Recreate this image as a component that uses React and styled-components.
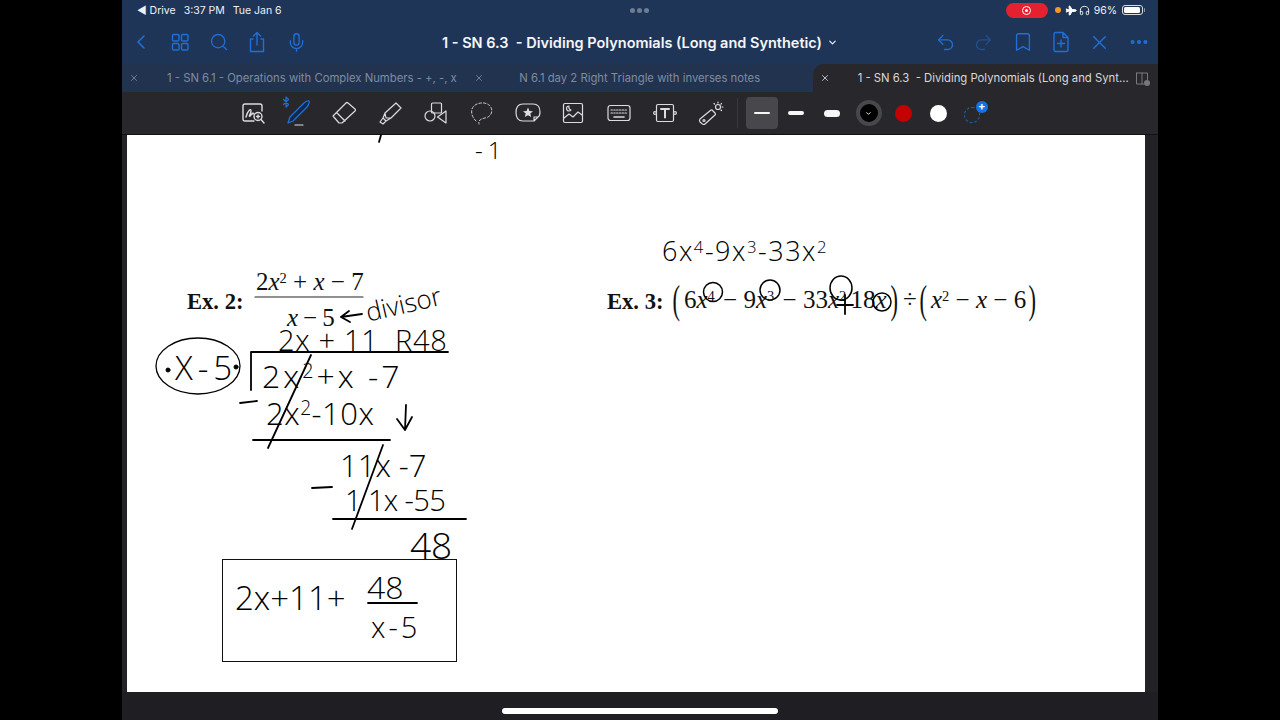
import React from "react";
import styled, { createGlobalStyle } from "styled-components";
import { ChevronLeft, Search, Mic, Undo2, Redo2, Bookmark, X, MoreHorizontal, ChevronDown, Plane, Headphones, Bluetooth } from "lucide-react";

const GlobalStyle = createGlobalStyle`
  html, body { margin: 0; padding: 0; background: #000; }
  body { font-family: Inter, "Liberation Sans", sans-serif; overflow: hidden; }
`;

const Screen = styled.div`
  width: 1036px;
  height: 720px;
  margin: 0 auto;
  display: flex;
  flex-direction: column;
  background: #1f1f23;
`;

const StatusBar = styled.div`
  height: 20px;
  background: #1f3557;
  color: #fff;
  display: flex;
  align-items: center;
  padding: 0 13px 0 15px;
  font-size: 10.5px;
`;
const StatusItem = styled.span`
  margin-left: ${(p) => p.$gap || 0}px;
  white-space: nowrap;
  color: #eef1f5;
`;
const Dots = styled.div`
  flex: 1;
  display: flex;
  justify-content: center;
  gap: 2px;
  padding-right: 8px;
  span { width: 5px; height: 5px; border-radius: 50%; background: #6e7d93; }
`;
const RecPill = styled.div`
  width: 42px;
  height: 15px;
  border-radius: 8px;
  background: #e5202f;
  display: flex;
  align-items: center;
  justify-content: center;
  i { width: 9px; height: 9px; border-radius: 50%; border: 1.5px solid #fff; display: flex; align-items: center; justify-content: center; box-sizing: border-box; }
  i::after { content: ""; width: 3px; height: 3px; border-radius: 50%; background: #fff; }
`;
const OrangeDot = styled.span`
  width: 6px;
  height: 6px;
  border-radius: 50%;
  background: #f09a2c;
  margin: 0 4px 0 7px;
`;
const PlaneIcon = styled(Plane)`
  transform: rotate(45deg);
`;
const PhonesIcon = styled(Headphones)`
  margin-left: 3px;
`;
const Battery = styled.div`
  width: 21px;
  height: 10px;
  margin: 0 2px 0 5px;
  border: 1px solid #d7dbe2;
  border-radius: 3px;
  padding: 1px;
  box-sizing: border-box;
  position: relative;
  &::before { content: ""; display: block; height: 100%; width: 92%; background: #fff; border-radius: 1.5px; }
  &::after { content: ""; position: absolute; right: -3px; top: 2px; width: 1.5px; height: 4px; background: #8f98a8; border-radius: 1px; }
`;

const NavBar = styled.div`
  height: 44px;
  background: #1f3557;
  display: grid;
  grid-template-columns: 1fr auto 1fr;
  align-items: center;
  color: #1f6fd6;
`;
const NavGroup = styled.div`
  display: flex;
  align-items: center;
  justify-content: ${(p) => (p.$end ? "flex-end" : "flex-start")};
`;
const NavBtn = styled.div`
  width: 38.7px;
  height: 26px;
  flex: none;
  display: flex;
  align-items: center;
  justify-content: center;
  color: ${(p) => (p.$dim ? "#235089" : "#1f6fd6")};
`;
const Title = styled.div`
  color: #f4f6f9;
  font-size: 14.5px;
  font-weight: 600;
  display: flex;
  align-items: center;
  gap: 5px;
  white-space: pre;
`;

const TabRow = styled.div`
  height: 28px;
  background: #1f3557;
  display: grid;
  grid-template-columns: repeat(3, 1fr);
`;
const Tab = styled.div`
  display: flex;
  align-items: center;
  padding: 0 8px 0 7px;
  font-size: 11.3px;
  white-space: pre;
  color: ${(p) => (p.$active ? "#d8d9dc" : "#7e8ba1")};
  background: ${(p) => (p.$active ? "#28282c" : "#223350")};
  border-radius: ${(p) => (p.$active ? "10px 0 0 0" : "0")};
`;
const TabLabel = styled.span`
  margin-left: ${(p) => p.$indent}px;
  flex: ${(p) => (p.$grow ? 1 : "none")};
`;
const PanelIcon = styled.span`
  position: relative;
  display: flex;
  color: #77777c;
  &::after {
    content: "";
    position: absolute;
    right: 0;
    bottom: 0;
    width: 6px;
    height: 6px;
    border-radius: 50%;
    background: #77777c;
  }
`;

const ToolBar = styled.div`
  height: 42px;
  background: #28282c;
  display: flex;
  align-items: center;
  padding-left: 108px;
  border-bottom: 1px solid #111;
  box-sizing: content-box;
`;
const Tool = styled.div`
  width: 45.8px;
  height: 32px;
  flex: none;
  display: flex;
  align-items: center;
  justify-content: center;
  color: #dcdcde;
  position: relative;
`;
const Divider = styled.div`
  width: 1px;
  height: 30px;
  background: #38383c;
  margin: 0 8px 0 3px;
`;
const SizeBtn = styled.div`
  width: ${(p) => (p.$active ? 32 : 36)}px;
  height: 32px;
  border-radius: 4px;
  flex: none;
  background: ${(p) => (p.$active ? "#47474c" : "transparent")};
  display: flex;
  align-items: center;
  justify-content: center;
  &::before {
    content: "";
    width: ${(p) => p.$w}px;
    height: ${(p) => p.$h}px;
    border-radius: 4px;
    background: #f6f6f6;
  }
`;
const Swatch = styled.div`
  width: 35px;
  flex: none;
  display: flex;
  align-items: center;
  justify-content: center;
  &::before {
    content: "";
    width: 17px;
    height: 17px;
    border-radius: 50%;
    background: ${(p) => p.$color};
  }
`;
const BlackSwatch = styled.div`
  width: 26px;
  height: 26px;
  margin: 0 4.5px 0 6px;
  flex: none;
  border-radius: 50%;
  background: #000;
  border: 4px solid #47474c;
  box-sizing: border-box;
  color: #fff;
  display: flex;
  align-items: center;
  justify-content: center;
`;
const AddColor = styled.div`
  width: 28px;
  height: 26px;
  margin-left: 7.5px;
  position: relative;
  flex: none;
  &::before {
    content: "";
    position: absolute;
    left: 0;
    top: 7px;
    width: 16px;
    height: 16px;
    border-radius: 50%;
    border: 1.3px dashed #2a63b0;
    box-sizing: border-box;
  }
  &::after {
    content: "+";
    position: absolute;
    left: 12px;
    top: 1px;
    width: 12px;
    height: 12px;
    border-radius: 50%;
    background: #0f74e8;
    color: #fff;
    font-size: 11px;
    line-height: 11px;
    font-weight: 700;
    text-align: center;
  }
`;
const BtBadge = styled.span`
  position: absolute;
  left: 4px;
  top: -1px;
  color: #1f6fd6;
  display: flex;
`;

const Body = styled.div`
  flex: 1;
  display: flex;
  padding: 0 13px 0 5px;
  background: #232327;
`;
const Page = styled.div`
  flex: 1;
  background: #fff;
  position: relative;
`;
const HomeArea = styled.div`
  height: 28px;
  background: #1f1f23;
  display: flex;
  align-items: flex-end;
  justify-content: center;
  padding-bottom: 6px;
  box-sizing: border-box;
  &::before { content: ""; width: 276px; height: 6px; border-radius: 3px; background: #fff; }
`;

// things written on the note sit at their place on the page
const Printed = styled.span`
  position: absolute;
  left: ${(p) => p.$x - 127}px;
  top: ${(p) => p.$y - 135}px;
  font-family: "Liberation Serif", serif;
  font-size: ${(p) => p.$size || 25}px;
  font-weight: ${(p) => (p.$bold ? 700 : 400)};
  line-height: 1;
  color: #111;
  white-space: pre;
  i { font-style: italic; }
  sup {
    font-size: 0.58em;
    line-height: 0;
    vertical-align: baseline;
    position: relative;
    top: -0.5em;
    padding-right: ${(p) => p.$supGap || 0}px;
  }
`;
const Paren = styled(Printed)`
  transform: scale(0.9, 1.6);
  transform-origin: center;
`;
const Ink = styled.span`
  position: absolute;
  left: ${(p) => p.$x - 127}px;
  top: ${(p) => p.$y - 135}px;
  font-family: "Open Sans", "Liberation Sans", sans-serif;
  font-weight: 300;
  font-size: ${(p) => p.$size}px;
  line-height: 1;
  letter-spacing: ${(p) => p.$track || 0}px;
  color: #000;
  white-space: pre;
  transform: rotate(${(p) => p.$rot || 0}deg);
  transform-origin: left center;
  sup { font-size: 0.62em; line-height: 0; vertical-align: baseline; position: relative; top: -0.5em; }
`;
const InkLayer = styled.svg`
  position: absolute;
  left: 0;
  top: 0;
  width: 1018px;
  height: 557px;
  overflow: visible;
`;
const AnswerBox = styled.div`
  position: absolute;
  left: ${222 - 127}px;
  top: ${559 - 135}px;
  width: 235px;
  height: 103px;
  border: 1.5px solid #111;
  box-sizing: border-box;
`;

const Ico = ({ children, w = 26, h = 26, vb = "0 0 26 26", sw = 1.2 }) => (
  <svg width={w} height={h} viewBox={vb} fill="none" stroke="currentColor" strokeWidth={sw} strokeLinecap="round" strokeLinejoin="round">
    {children}
  </svg>
);

const strokes = [
  // tick left over from the page above
  "M381 135 L379 142",
  // divisor arrow
  "M362 314 L341 317 M349 311 L341 317 L350 322",
  // long division bar
  "M251 390 L251 352 L448 352",
  // slash, work lines, down arrow
  "M311 355 L268 448",
  "M253 440 L390 440",
  "M240 403 L257 401",
  "M406 405 L405 430 M397 419 L405 430 L412 417",
  "M383 445 L352 529",
  "M333 519 L466 519",
  "M312 488 L332 487",
  "M368 603 L417 603",
];

export default function App() {
  return (
    <>
      <GlobalStyle />
      <Screen>
        <StatusBar>
          <StatusItem>◀ Drive</StatusItem>
          <StatusItem $gap={8}>3:37 PM</StatusItem>
          <StatusItem $gap={8}>Tue Jan 6</StatusItem>
          <Dots><span /><span /><span /></Dots>
          <RecPill><i /></RecPill>
          <OrangeDot />
          <PlaneIcon size={11} fill="#fff" color="#fff" />
          <PhonesIcon size={11} color="#fff" />
          <StatusItem $gap={4}>96%</StatusItem>
          <Battery />
        </StatusBar>
        <NavBar>
          <NavGroup>
            <NavBtn><ChevronLeft size={24} strokeWidth={1.6} /></NavBtn>
            <NavBtn>
              <Ico w={20} h={20} vb="0 0 20 20" sw={1.4}>
                <rect x="2.5" y="2.5" width="6.5" height="6.5" rx="1.2" />
                <rect x="11.5" y="2.5" width="6.5" height="6.5" rx="1.2" />
                <rect x="2.5" y="11.5" width="6.5" height="6.5" rx="1.2" />
                <rect x="11.5" y="11.5" width="6.5" height="6.5" rx="1.2" />
              </Ico>
            </NavBtn>
            <NavBtn><Search size={20} strokeWidth={1.6} /></NavBtn>
            <NavBtn>
              <Ico w={20} h={24} vb="0 0 20 24" sw={1.4}>
                <path d="M6 9 H3.5 V21.5 H16.5 V9 H14 M10 15 V2.5 M6.5 6 L10 2.5 L13.5 6" />
              </Ico>
            </NavBtn>
            <NavBtn><Mic size={21} strokeWidth={1.5} /></NavBtn>
          </NavGroup>
          <Title>1 - SN 6.3  - Dividing Polynomials (Long and Synthetic)<ChevronDown size={11} strokeWidth={2.5} /></Title>
          <NavGroup $end>
            <NavBtn><Undo2 size={21} strokeWidth={1.5} /></NavBtn>
            <NavBtn $dim><Redo2 size={21} strokeWidth={1.5} /></NavBtn>
            <NavBtn><Bookmark size={22} strokeWidth={1.5} /></NavBtn>
            <NavBtn>
              <Ico w={20} h={24} vb="0 0 20 24" sw={1.4}>
                <path d="M3 4 Q3 2.5 4.5 2.5 H12 L17 7.5 V20 Q17 21.5 15.5 21.5 H4.5 Q3 21.5 3 20 Z M12 2.5 V7.5 H17 M10 10 V17 M6.5 13.5 H13.5" />
              </Ico>
            </NavBtn>
            <NavBtn><X size={23} strokeWidth={1.4} /></NavBtn>
            <NavBtn><MoreHorizontal size={22} strokeWidth={2.4} /></NavBtn>
          </NavGroup>
        </NavBar>
        <TabRow>
          <Tab><X size={10} /><TabLabel $indent={28}>1 - SN 6.1 - Operations with Complex Numbers - +, -, x</TabLabel></Tab>
          <Tab><X size={10} /><TabLabel $indent={35}>N 6.1 day 2 Right Triangle with inverses notes</TabLabel></Tab>
          <Tab $active>
            <X size={10} />
            <TabLabel $indent={28} $grow>1 - SN 6.3  - Dividing Polynomials (Long and Synt...</TabLabel>
            <PanelIcon>
              <Ico w={15} h={15} vb="0 0 15 15" sw={1}>
                <path d="M1.5 2 H12.5 V9 M9 13 H1.5 V2 M7 2 V13" />
              </Ico>
            </PanelIcon>
          </Tab>
        </TabRow>
        <ToolBar>
          <Tool>
            <Ico w={24} h={24} vb="0 0 24 24" sw={1.4}>
              <path d="M13 20 H4 Q2 20 2 18 V5 Q2 3 4 3 H19 Q21 3 21 5 V10" />
              <path d="M5 16 C7 9 10 7 10 10 C10 13 7 16 9 15 C11 13 12 11 13 13" />
              <circle cx="17" cy="15.5" r="4" />
              <path d="M17 14 V17 M15.5 15.5 H18.5 M20 18.5 L23 22" />
            </Ico>
          </Tool>
          <Tool>
            <BtBadge><Bluetooth size={12} strokeWidth={2.4} /></BtBadge>
            <Ico w={26} h={28} vb="0 0 26 28">
              <path d="M2 24 L4 18 L18 4 Q22 1 23 2 Q24 4 21 8 L7 22 Z" stroke="#1f6fd6" fill="#11284a" strokeWidth="1.3" />
              <path d="M9 26 H17" stroke="#dcdcde" />
            </Ico>
          </Tool>
          <Tool>
            <Ico w={28} h={28} vb="0 0 28 28">
              <path d="M3 17 L16 4 Q17 3 18 4 L25 10 Q26 11 25 12 L12 24 H9 Z M7 14 L15 22" />
            </Ico>
          </Tool>
          <Tool>
            <Ico w={26} h={26} vb="0 0 26 26">
              <path d="M8 13 L19 3 L24 8 L14 18 L9 18 Z M8 13 L6 18 L9 21 L14 18 M6 18 L3 22 L6 24 L9 21" />
            </Ico>
          </Tool>
          <Tool>
            <Ico w={26} h={26} vb="0 0 26 26">
              <rect x="8.5" y="3" width="10" height="10" rx="1" />
              <circle cx="7" cy="16" r="5" />
              <path d="M23 11 V23 L14.5 17 Z" />
            </Ico>
          </Tool>
          <Tool>
            <Ico w={24} h={26} vb="0 0 24 26" sw={0.9}>
              <path d="M6 21 C2 17 1 13 2 9 C4 3 14 1 19 5 C24 9 22 17 15 18 C11 19 8 20 9 24" strokeDasharray="2.5 2" />
            </Ico>
          </Tool>
          <Tool>
            <Ico w={28} h={24} vb="0 0 28 24">
              <path d="M9 3 H19 Q26 3 26 11 Q26 15 24 16 L20 20 H9 Q2 20 2 11.5 Q2 3 9 3 Z M24 16 L20 16 V20" />
              <path d="M14 6.5 L15.5 10 L19 10.3 L16.3 12.6 L17.2 16 L14 14.2 L10.8 16 L11.7 12.6 L9 10.3 L12.5 10 Z" fill="currentColor" stroke="none" />
            </Ico>
          </Tool>
          <Tool>
            <Ico w={24} h={24} vb="0 0 24 24">
              <rect x="2.5" y="2.5" width="19" height="19" rx="1.5" />
              <path d="M3 17 L8 13 L12 16 L17 11 L21 14 M8 5 A2.5 2.5 0 1 0 10 9 A3 3 0 0 1 8 5" />
            </Ico>
          </Tool>
          <Tool>
            <Ico w={26} h={20} vb="0 0 26 20">
              <rect x="2" y="2.5" width="22" height="15" rx="2.5" />
              <path d="M5 7 H21 M5 10 H21" strokeDasharray="1.4 1.4" />
              <path d="M8 14 H18" strokeWidth="1.6" />
            </Ico>
          </Tool>
          <Tool>
            <Ico w={26} h={24} vb="0 0 26 24">
              <rect x="4.5" y="3.5" width="17" height="17" rx="1.5" />
              <path d="M9 8 H17 M13 8 V16.5" strokeWidth="2" />
              <circle cx="3" cy="12" r="1.4" fill="#28282c" />
              <circle cx="23" cy="12" r="1.4" fill="#28282c" />
            </Ico>
          </Tool>
          <Tool>
            <Ico w={28} h={26} vb="0 0 28 26">
              <path d="M3 19 L14 10 Q15 9.5 16 11 L18 13 Q19 14.5 18 15 L8 24 Q7 25 5.5 24 L3 22 Q2 20.5 3 19 Z" />
              <circle cx="7" cy="20.5" r="1" />
              <circle cx="21" cy="7" r="2.5" />
              <path d="M21 2 V3 M26 7 H25 M17 3.5 L17.7 4.2 M24.5 3.5 L24 4.2 M24.5 10.5 L24 10" />
            </Ico>
          </Tool>
          <Divider />
          <SizeBtn $active $w={16} $h={2} />
          <SizeBtn $w={16} $h={4} />
          <SizeBtn $w={16} $h={7} />
          <BlackSwatch><ChevronDown size={7} strokeWidth={3} /></BlackSwatch>
          <Swatch $color="#c40000" />
          <Swatch $color="#fff" />
          <AddColor />
        </ToolBar>
        <Body>
          <Page>
            {/* printed worksheet */}
            <Printed $x={187} $y={291} $size={22.6} $bold>Ex. 2:</Printed>
            <Printed $x={256} $y={269}>2<i>x</i><sup>2</sup> + <i>x</i> − 7</Printed>
            <Printed $x={287} $y={305}><i>x</i>{"\u2009−\u2009"}5</Printed>
            <Printed $x={607} $y={291} $size={22.6} $bold>Ex. 3:</Printed>
            <Paren $x={672} $y={287}>(</Paren>
            <Printed $x={684} $y={287} $supGap={2}>6<i>x</i><sup>4</sup> − 9<i>x</i><sup>3</sup> − 33<i>x</i><sup>2</sup>{"\u200a"}18<i>x</i></Printed>
            <Paren $x={890} $y={287}>)</Paren>
            <Printed $x={903} $y={287}>÷</Printed>
            <Paren $x={919} $y={287}>(</Paren>
            <Printed $x={931} $y={287}><i>x</i><sup>2</sup> − <i>x</i> − 6</Printed>
            <Paren $x={1028} $y={287}>)</Paren>

            {/* handwriting */}
            <Ink $x={475} $y={138} $size={24} $track={5}>-1</Ink>
            <Ink $x={662} $y={237} $size={27} $track={1.5}>6x<sup>4</sup>-9x<sup>3</sup>-33x<sup>2</sup></Ink>
            <Ink $x={366} $y={299} $size={26} $rot={-13}>divisor</Ink>
            <Ink $x={278} $y={325} $size={29} $track={0.7}>2x + 11  R48</Ink>
            <Ink $x={175} $y={351} $size={33} $track={5}>X-5</Ink>
            <Ink $x={262} $y={360} $size={32} $track={3}>2x<sup>2</sup>+x -7</Ink>
            <Ink $x={266} $y={398} $size={31} $track={0.5}>2x<sup>2</sup>-10x</Ink>
            <Ink $x={340} $y={450} $size={31}>11x -7</Ink>
            <Ink $x={345} $y={485} $size={29} $track={-0.6}>1 1x -55</Ink>
            <Ink $x={410} $y={526} $size={37}>48</Ink>
            <Ink $x={235} $y={581} $size={33}>2x+11+</Ink>
            <Ink $x={367} $y={571} $size={32}>48</Ink>
            <Ink $x={371} $y={612} $size={29} $track={3}>x-5</Ink>

            <AnswerBox />
            <InkLayer viewBox="127 135 1018 557" fill="none" stroke="#000" strokeLinecap="round" strokeLinejoin="round">
              {strokes.map((d) => <path key={d} d={d} strokeWidth="1.8" />)}
              <line x1="255" y1="297" x2="363" y2="297" stroke="#222" strokeWidth="1.2" />
              <ellipse cx="198" cy="366" rx="42" ry="28" strokeWidth="1.3" />
              <circle cx="168" cy="370" r="2" fill="#000" />
              <circle cx="236" cy="367" r="2" fill="#000" />
              <circle cx="713" cy="292" r="9.5" strokeWidth="1.5" />
              <circle cx="770" cy="290" r="10" strokeWidth="1.5" />
              <ellipse cx="841" cy="288" rx="11" ry="12" strokeWidth="1.5" />
              <circle cx="882" cy="302" r="9" strokeWidth="1.5" />
              <path d="M837 305 H853 M845 295 L845 314" strokeWidth="1.8" />
            </InkLayer>
          </Page>
        </Body>
        <HomeArea />
      </Screen>
    </>
  );
}
